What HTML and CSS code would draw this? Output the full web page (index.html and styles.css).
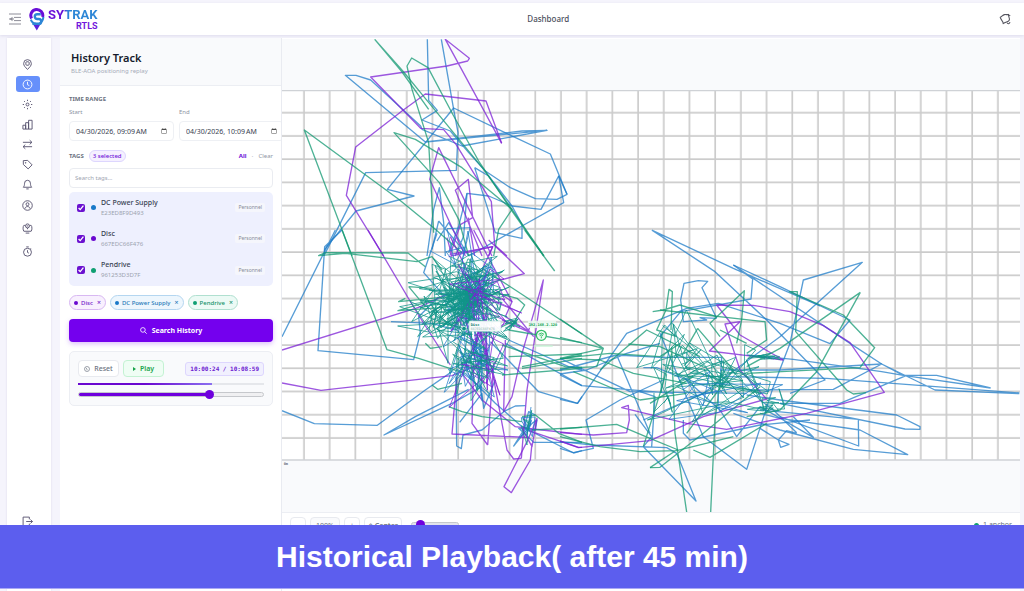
FILE: index.html
```html
<!DOCTYPE html>
<html lang="en">
<head>
  <meta charset="UTF-8" />
  <meta name="viewport" content="width=device-width, initial-scale=1.0" />
  <title>Sytrak RTLS - History Track</title>
  <link rel="stylesheet" href="styles.css">
</head>
<body>
  <!-- Top bar -->
  <header class="topbar">
    <div class="brand">
      <button class="icon-button" aria-label="Toggle menu">
        <svg width="12" height="12" viewBox="0 0 12 12" fill="none" stroke="#8d8d98" stroke-width="1"><path d="M0 1h12M5 4.4h7M5 7.6h7M0 11h12M0 6h5"/><path d="M3.5 3.8v4.4L.6 6z" fill="#8d8d98" stroke="none"/></svg>
      </button>
      <svg class="logo-mark" width="16" height="24" viewBox="0 0 16 24" fill="none">
        <path d="M2.600 11.500A6 6 0 1 1 13.600 10" stroke="#6a0fd8" stroke-width="3"/>
        <path d="M11.800 7.200H8.200a2.400 2.400 0 0 0 0 4.800h1.600a2.400 2.400 0 0 1 0 4.800H3.400" stroke="#2d86d6" stroke-width="2.400"/>
        <path d="M1.800 12.600c1 2.400 3 4 5.200 4.200M14.300 10c0 3-2 5.500-4 6.700" stroke="#2d86d6" stroke-width="2"/>
        <path d="M4.500 18h6.500L7.800 23.500z" fill="#5a22dc"/>
      </svg>
      <div class="logo-text">
        <span class="logo-name">SYTRAK</span>
        <span class="logo-sub">RTLS</span>
      </div>
    </div>
    <div class="page-title">Dashboard</div>
    <button class="icon-button" aria-label="Notifications">
      <svg width="12" height="12" viewBox="0 0 12 12" fill="none" stroke="#55555f" stroke-width="1.100" stroke-linejoin="round"><path d="M1.200 4.200C3 4 3.400 2 5.400 1.600 7 1.300 8 2 9.600 1.400 9 3.400 10.800 4.600 10.400 6.800 9.800 9 7 8.600 4.200 10.600 4.400 8 1.600 7 1.200 4.200z"/><path d="M8 9.600c.6 1.600 2.600 1.400 3-.4M10.200 2.200l1 .6"/></svg>
    </button>
  </header>

  <main class="workspace">
    <!-- Sidebar -->
    <nav class="sidebar">
      <a class="nav-link" href="#" aria-label="Live map"><svg viewBox="0 0 12 12"><path d="M6 11.300C3.500 9 1.800 7.200 1.800 4.900a4.200 4.200 0 0 1 8.400 0C10.200 7.200 8.500 9 6 11.300z"/><rect x="4.200" y="3" width="3.600" height="3.800" rx="1"/></svg></a>
      <a class="nav-link active" href="#" aria-label="History"><svg viewBox="0 0 12 12"><circle cx="6" cy="6" r="4.800"/><path d="M6 3v3.200l2 1"/></svg></a>
      <a class="nav-link" href="#" aria-label="Settings"><svg viewBox="0 0 12 12"><circle cx="6" cy="6" r="1.600"/><path d="M6 .8v1.400M6 9.800v1.400M.8 6h1.400M9.800 6h1.400M2.300 2.300l1 1M8.700 8.700l1 1M9.700 2.300l-1 1M3.300 8.700l-1 1"/></svg></a>
      <a class="nav-link" href="#" aria-label="Reports"><svg viewBox="0 0 12 12"><path d="M1 6.800h3V11H1zM4 4h3.200v7H4zM7.200 1.400H11V11H7.200z"/></svg></a>
      <a class="nav-link" href="#" aria-label="Transfers"><svg viewBox="0 0 12 12"><path d="M1 3.600h9.800M8.400 1.300l2.400 2.300-2.400 2.300M11 8.400H1.200M3.600 6.100L1.200 8.400l2.400 2.300"/></svg></a>
      <a class="nav-link" href="#" aria-label="Tags"><svg viewBox="0 0 12 12"><path d="M1.400 1.800l4.800-.3 4.800 4.900-4.300 4.400L1.500 6z"/><circle cx="4" cy="4.200" r=".4"/></svg></a>
      <a class="nav-link" href="#" aria-label="Alerts"><svg viewBox="0 0 12 12"><path d="M1.400 9h9.200C9.200 7.600 9.400 6.400 9.200 4.600a3.200 3.200 0 0 0-6.400 0C2.600 6.400 2.800 7.600 1.400 9zM4.700 10.800h2.600"/></svg></a>
      <a class="nav-link wide" href="#" aria-label="Users"><svg viewBox="0 0 12 12"><circle cx="6" cy="6" r="5.200"/><circle cx="6" cy="4.600" r="1.600"/><path d="M3.300 9.400c.2-3 5.200-3 5.400 0"/></svg></a>
      <a class="nav-link wide" href="#" aria-label="Assets"><svg viewBox="0 0 12 12"><path d="M3.200 2.600H2C1 3.600.8 7.600 2 9h8c1.200-1.400 1-5.400 0-6.400H8.800M4 11h4"/><circle cx="6" cy="3.200" r="2.200"/><path d="M5 3.200h2M6 5.400v1.400"/></svg></a>
      <a class="nav-link wide" href="#" aria-label="Timers"><svg viewBox="0 0 12 12"><circle cx="6" cy="6.800" r="4.300"/><path d="M6 4.600v2.400l1.500.8M4.600 1h2.800M9.400 2.600l.8.800"/></svg></a>
      <a class="nav-link logout" href="#" aria-label="Log out"><svg viewBox="0 0 12 12"><path d="M8 3.600V1.200H1.200v9.600H8V8.400M4.600 6h6.800M9.200 3.800L11.400 6 9.200 8.200"/></svg></a>
    </nav>

    <!-- History panel -->
    <section class="panel">
      <div class="panel-header">
        <h1>History Track</h1>
        <p>BLE-AOA positioning replay</p>
      </div>

      <div class="panel-body">
        <h2 class="section-label">TIME RANGE</h2>
        <div class="date-row">
          <div class="date-field">
            <label for="start">Start</label>
            <input type="datetime-local" id="start" value="2026-04-30T09:09">
          </div>
          <div class="date-field">
            <label for="end">End</label>
            <input type="datetime-local" id="end" value="2026-04-30T10:09">
          </div>
        </div>

        <div class="tags-head">
          <h2 class="section-label">TAGS</h2>
          <span class="count">3 selected</span>
          <button class="text-button all">All</button>
          <span class="dot-sep">·</span>
          <button class="text-button">Clear</button>
        </div>
        <input type="text" class="tag-search" placeholder="Search tags..." aria-label="Search tags">

        <div class="tag-list">
          <label class="tag-row">
            <input type="checkbox" checked>
            <span class="dot blue"></span>
            <span class="tag-info"><span class="tag-name">DC Power Supply</span><span class="tag-id">E23ED8F9D493</span></span>
            <span class="tag-type">Personnel</span>
          </label>
          <label class="tag-row">
            <input type="checkbox" checked>
            <span class="dot purple"></span>
            <span class="tag-info"><span class="tag-name">Disc</span><span class="tag-id">667EDC66F476</span></span>
            <span class="tag-type">Personnel</span>
          </label>
          <label class="tag-row">
            <input type="checkbox" checked>
            <span class="dot green"></span>
            <span class="tag-info"><span class="tag-name">Pendrive</span><span class="tag-id">961253D3D7F</span></span>
            <span class="tag-type">Personnel</span>
          </label>
        </div>

        <div class="chips">
          <button class="chip chip-purple"><span class="dot purple"></span>Disc <span class="chip-x">×</span></button>
          <button class="chip chip-blue"><span class="dot blue"></span>DC Power Supply <span class="chip-x">×</span></button>
          <button class="chip chip-green"><span class="dot green"></span>Pendrive <span class="chip-x">×</span></button>
        </div>

        <button class="search-button">
          <svg width="7" height="7" viewBox="0 0 12 12" fill="none" stroke="#fff" stroke-width="1.400"><circle cx="5" cy="5" r="4"/><path d="M8 8l3.500 3.500"/></svg>
          Search History
        </button>

        <div class="player">
          <div class="player-row">
            <button class="player-button"><svg width="6" height="6" viewBox="0 0 12 12" fill="none" stroke="#6b7280" stroke-width="1.300"><circle cx="6" cy="6" r="5"/><path d="M3.500 3.500L6 6v2.500"/></svg>Reset</button>
            <button class="player-button play"><svg width="3" height="4" viewBox="0 0 3 4"><path d="M0 0l3 2L0 4z" fill="#16a34a"/></svg>Play</button>
            <span class="clock">10:00:24 / 10:08:59</span>
          </div>
          <div class="progress"><div class="progress-fill" style="width: 72%"></div></div>
          <input type="range" class="seek" min="0" max="100" value="72" aria-label="Playback position">
        </div>
      </div>
    </section>

    <!-- Map -->
    <section class="map-panel">
      <svg class="map" viewBox="0 0 2214 1419">
        <defs>
          <pattern id="grid" x="27" y="186" width="77.100" height="69.700" patternUnits="userSpaceOnUse">
            <path d="M39 0V70M0 35H78" stroke="#cbcbcb" stroke-width="5"/>
          </pattern>
        </defs>
        <rect class="floor" y="155" width="2214" height="1108"/>
        <rect y="155" width="2214" height="1108" fill="url(#grid)"/>
        <path d="M0 155H2214M0 1263H2214" stroke="#cfd2d6" stroke-width="4"/>

        <!-- Upper part of the floor -->
        <g class="track-blue" transform="translate(0 -9)">
          <path d="M436 10L440 193 466 223 420 252 505 285 560 350 610 405 685 455 760 488 825 490 855 475 830 420 777 520 690 510 620 480 555 472 530 570 500 650"/>
          <path d="M855 475L805 354 680 295 515 216 316 460 396 480 222 525 128 640 126 660"/>
          <path d="M478 10L515 220 528 290 523 403 251 410 128 655"/>
          <path d="M416 270L266 132 222 118 190 118 430 318 795 283 720 285 430 318M795 283L540 330 420 280 416 270"/>
          <path d="M578 395L640 590 720 607 720 565 690 510 620 420 578 395M830 420L845 500 720 570 560 660"/>
          <path d="M435 660L455 520 472 455 485 560 490 660M470 555L450 640M470 555L550 650M555 472L545 600 520 660M465 615L500 560 560 660"/>
        </g>
        <g class="track-purple" transform="translate(0 -9)">
          <path d="M659 322L490 10 562 67 557 75 495 90 266 123 416 277 485 281 522 325 628 497 638 627 675 660"/>
          <path d="M659 322L612 195 430 174 360 225 221 333 193 478 305 660"/>
          <path d="M550 660L443 430 470 335 630 660M600 660L520 463 559 430 572 545 535 566 505 655 632 632 620 660M559 545L578 660M495 605L510 660"/>
        </g>
        <g class="track-green" transform="translate(0 -9)">
          <path d="M278 10L365 108 420 175 605 400 690 520 786 660M278 10L358 105 440 220"/>
          <path d="M455 590L440 320 390 160 375 90 389 66 438 95 515 240 590 375 690 525 785 660"/>
          <path d="M560 660L530 550 472 440 336 290 400 310 540 395 690 520 650 580 635 660"/>
          <path d="M210 660L67 282 350 490 460 580 540 650"/>
        </g>

        <!-- Left part of the floor -->
        <g class="track-blue" transform="translate(0 573)">
          <path d="M0 320L160 0M180 0L128 50 108 362 395 389 415 310 410 260 470 200"/>
          <path d="M0 542L97 581 286 586 430 480 510 425M600 470L510 520 306 615 400 560 560 478M327 275L450 280 520 300"/>
          <path d="M522 440L524 648 538 656 543 615 600 600 665 545 700 528 730 527"/>
          <path d="M625 335L770 485 887 520 900 500M670 340L900 467M680 330L860 410 900 420M550 430L640 520 720 590 875 669 900 662"/>
          <path d="M760 555L740 545 725 600 695 648 750 580 765 570 760 600 710 595 755 637 900 637M465 10L425 128 480 190M533 577L600 490 605 535 640 450"/>
        </g>
        <g class="track-purple" transform="translate(0 573)">
          <path d="M258 0L400 240 505 405M0 360L410 232 500 190M0 459L117 481 510 437 600 400"/>
          <path d="M500 80L632 50 600 120M620 30L727 131 600 165 550 130M575 0L690 215M505 20L560 130"/>
          <path d="M755 320L660 205M718 685L735 480 784 150 720 370 690 500 665 545 670 330M640 180L690 215 670 260 750 310 660 270"/>
          <path d="M735 622L510 612 525 440M617 645L570 580 575 400M617 645L635 400M630 420L660 580 675 660 695 687 718 685"/>
          <path d="M750 640L745 690 688 788 666 770 735 635 765 565 750 650 720 595M540 430L600 510 700 590 780 600 900 613M740 602L890 652 900 652"/>
        </g>
        <g class="track-green" transform="translate(0 573)">
          <path d="M180 0L315 359 410 385 550 430M430 110L378 69 130 68 110 77 190 70 405 95 450 80 480 120"/>
          <path d="M728 0L818 123M600 115L700 180 900 312M630 185L705 205 728 225 700 270 640 300"/>
          <path d="M520 230L348 242 440 215 540 240M500 200L350 215 370 205M380 170L450 175M380 170L430 230M430 340L445 355 480 350M450 465L467 478 540 460"/>
          <path d="M500 530L540 545 600 560 720 575M680 300L900 338M660 435L900 415M720 410L900 375M680 380L900 372M720 415L900 385M660 345L850 410 900 412M720 560L760 555 830 610 900 637M750 600L900 592"/>
        </g>

        <!-- Right part of the floor -->
        <g class="track-blue" transform="translate(834 543)">
          <path d="M520 135L660 200 870 300 810 371 660 310 475 250 380 265 200 340 52 550 0 538"/>
          <path d="M780 258L520 145 277 31 465 155 620 300 775 460 795 480 690 520M520 135L870 370 965 432M520 135L578 177 573 237 362 275 300 350"/>
          <path d="M660 350L907 127 730 180 690 370 640 500 560 748 430 650 375 520 300 340M660 350L430 520 250 600"/>
          <path d="M470 295L426 203 443 184 415 182 372 190 362 240 370 305 440 300 420 293 470 295"/>
          <path d="M0 415L210 515 560 520M0 465L65 497 340 520M0 462L80 450 200 400 300 370M170 405L270 640M170 405L300 412 485 412 480 500M170 405L0 450"/>
          <path d="M310 480L180 540 78 600 100 685 40 698 0 685M225 583L275 650 250 680 408 843 350 700 320 683 100 675 0 665M240 515L285 530 275 680"/>
          <path d="M480 450L660 450 965 432 1125 510 1378 521M1292 504L1130 466 1030 466 1292 504M500 470L800 475 1378 519M560 405L700 418 965 455 1030 466 965 432M1040 466L840 550 660 550M965 432L820 508 560 510"/>
          <path d="M560 525L660 540 1010 585 1080 620 1080 628 1035 627 660 550M600 570L895 598 896 678 660 590M600 580L660 595 900 630 1043 704 880 688 660 630 520 580"/>
          <path d="M600 540L640 570 710 638M700 590L760 652 600 560M655 660L680 632 710 640M655 660L687 673 662 682 655 660M600 625L655 660"/>
          <path d="M250 443L290 443 380 480 480 570 530 650 600 560M370 600L370 640 390 660 600 615 750 600"/>
        </g>
        <g class="track-purple" transform="translate(834 543)">
          <path d="M670 420L540 345 470 255 580 256 690 275 790 317 870 368 973 517 740 580 500 628 380 610 185 563 205 556 208 600 200 638 100 645 0 638"/>
          <path d="M670 420L448 393 540 305 495 312 540 450 620 537 430 590 270 662 55 683 0 663"/>
        </g>
        <g class="track-green" transform="translate(834 543)">
          <path d="M0 297L130 385 110 440 0 445M0 352L130 385 0 415M0 415L150 400 300 410 360 370M205 372L300 380 430 440"/>
          <path d="M333 330L337 215 327 208 318 270 290 330 350 350M480 350L450 310 553 212 545 300 530 370M278 275L310 270 360 255 470 290"/>
          <path d="M901 217L660 385 560 440M901 217L800 400 770 455 660 570 560 590M918 518L880 522 860 510 707 335 712 215 688 215 850 285 944 383 900 443 560 460"/>
          <path d="M300 270L615 305 620 360 560 400M380 876L345 640 335 380M452 876L465 600 485 450M400 690L450 712 620 610M270 743L300 742 430 640 600 500"/>
          <path d="M0 627L170 613 270 655 355 690M0 650L120 680 240 695 350 692 520 650M0 415L120 420 220 460 380 490M40 455L240 540 380 520M270 743L350 690M335 400L300 520 250 680"/>
          <path d="M120 450L260 330 420 410M413 325L370 400M413 325L520 450 380 640M270 550L400 470M480 330L560 370"/>
        </g>

        <!-- Dense movement around the anchors, filled by script.js -->
        <g id="dense"></g>

        <g class="anchor">
          <rect x="738" y="845" width="84" height="22"/>
          <text x="740" y="860">192.168.2.120</text>
          <circle cx="778" cy="889" r="15"/>
          <path d="M770 886q8-8 16 0M773 890q5-5 10 0M778 892v6"/>
          <path class="anchor-line" d="M755 921H812"/>
        </g>
        <circle cx="546" cy="869" r="7" fill="#109488" stroke="#fff" stroke-width="2"/>
        <g class="tooltip">
          <rect x="561" y="846" width="96" height="31" rx="4"/>
          <text x="566" y="860">Disc</text>
          <text class="tooltip-id" x="566" y="872">667EDC66F476</text>
        </g>
        <text class="scale-label" x="5" y="1277">0m</text>
      </svg>

      <div class="map-toolbar">
        <button class="tool">−</button>
        <span class="tool zoom-level">100%</span>
        <button class="tool">+</button>
        <button class="tool center">◇ Center</button>
        <input type="range" class="trail" min="0" max="100" value="10" aria-label="Trail length">
        <span class="anchor-count"><span class="dot green"></span>1 anchor</span>
      </div>
    </section>
  </main>

  <div class="caption">Historical Playback( after 45 min)</div>

  <script src="script.js"></script>
</body>
</html>
```
FILE: styles.css
```css
* {
  box-sizing: border-box;
}

html, body {
  margin: 0;
  height: 100%;
  overflow: hidden;
}

body {
  display: flex;
  flex-direction: column;
  background: #f5f4fc;
  font-family: "Noto Sans", "Open Sans", sans-serif;
  font-size: 7px;
  color: #374151;
}

button, input {
  font-family: inherit;
  font-size: 7px;
  color: inherit;
}

button {
  padding: 0;
  border: none;
  background: none;
}

h1, h2, p {
  margin: 0;
}

/* Top bar */
.topbar {
  display: flex;
  align-items: center;
  justify-content: space-between;
  height: 32px;
  margin-top: 3px;
  padding: 0 13px 0 9px;
  background: white;
  box-shadow: 0 1px 3px rgba(60, 50, 120, 0.12);
}

.brand {
  display: flex;
  align-items: center;
}

.icon-button {
  display: flex;
}

.logo-mark {
  margin-left: 8px;
}

.logo-text {
  display: flex;
  flex-direction: column;
  align-items: flex-end;
  margin-left: 3px;
  font-family: Roboto, sans-serif;
  font-weight: bold;
}

.logo-name {
  font-size: 13px;
  line-height: 14px;
  background: linear-gradient(90deg, #6a0fd8 30%, #2d86d6 40%);
  background-clip: text;
  -webkit-background-clip: text;
  color: transparent;
}

.logo-sub {
  font-size: 9px;
  line-height: 9px;
  color: #7318dc;
}

.page-title {
  font-size: 8px;
  line-height: 12px;
  font-weight: 500;
  color: #4b4f5c;
}

/* Layout below the top bar */
.workspace {
  display: flex;
  flex: 1;
  min-height: 0;
  padding: 3px 4px 0 7px;
}

.sidebar {
  display: flex;
  flex-direction: column;
  align-items: center;
  width: 44px;
  padding: 16px 3px 60px 0;
  background: white;
  box-shadow: 0 0 2px rgba(60, 50, 120, 0.12);
}

.nav-link {
  display: flex;
  align-items: center;
  justify-content: center;
  width: 24px;
  height: 16px;
  margin: 2px 0;
  border-radius: 3px;
}

.nav-link.wide {
  height: 19px;
}

.nav-link svg {
  width: 11px;
  height: 11px;
  fill: none;
  stroke: #56526f;
  stroke-width: 1;
}

.nav-link.active {
  background: #6690fb;
}

.nav-link.active svg {
  stroke: white;
}

.logout {
  margin-top: auto;
}

/* History panel */
.panel {
  width: 222px;
  flex-shrink: 0;
  margin-left: 9px;
  background: white;
  border-right: 1px solid #e9ebf1;
  overflow: hidden;
}

.panel-header {
  height: 48px;
  padding: 12px 11px;
  background: #f9fafc;
  border-bottom: 1px solid #eceef3;
}

.panel-header h1 {
  font-size: 11px;
  line-height: 16px;
  font-weight: 600;
  color: #151a2d;
}

.panel-header p {
  font-size: 6px;
  line-height: 10px;
  color: #a5abb9;
}

.panel-body {
  padding: 8px 8px 0 9px;
}

.section-label {
  font-size: 6px;
  line-height: 10px;
  font-weight: bold;
  color: #6b7280;
}

.date-row {
  display: flex;
  gap: 5px;
  margin-top: 3px;
}

.date-field {
  flex: none;
  width: 105px;
}

.date-field label {
  display: block;
  font-size: 6px;
  line-height: 10px;
  color: #8e94a3;
}

.date-field input {
  display: block;
  width: 100%;
  height: 20px;
  margin-top: 4px;
  padding: 0 6px;
  border: 1px solid #eef0f4;
  border-radius: 4px;
  background: white;
}

.date-field input::-webkit-datetime-edit,
.date-field input::-webkit-datetime-edit-month-field,
.date-field input::-webkit-datetime-edit-day-field,
.date-field input::-webkit-datetime-edit-year-field,
.date-field input::-webkit-datetime-edit-hour-field,
.date-field input::-webkit-datetime-edit-minute-field,
.date-field input::-webkit-datetime-edit-ampm-field {
  padding: 0;
}

.date-field input::-webkit-calendar-picker-indicator {
  width: 6px;
  height: 6px;
  margin: 0;
  padding: 0;
  opacity: 0.7;
}

.tags-head {
  display: flex;
  align-items: center;
  height: 12px;
  margin: 9px 0 6px;
}

.count {
  margin-left: 5px;
  margin-right: auto;
  padding: 0 3px;
  border: 1px solid #ddd6fe;
  border-radius: 6px;
  background: #f5f0ff;
  font-size: 6px;
  line-height: 10px;
  font-weight: 500;
  color: #6d10d8;
}

.text-button {
  font-size: 6px;
  color: #9096a5;
}

.text-button.all {
  font-weight: bold;
  color: #6d10d8;
}

.dot-sep {
  margin: 0 5px;
  color: #c5c8d0;
}

.tag-search {
  display: block;
  width: 100%;
  height: 20px;
  padding: 0 5px;
  border: 1px solid #eaecf1;
  border-radius: 4px;
  font-size: 6px;
}

.tag-search::placeholder {
  color: #a0a5b1;
}

.tag-list {
  margin-top: 4px;
  border-radius: 5px;
  background: #eef0fe;
}

.tag-row {
  display: flex;
  align-items: center;
  height: 31px;
  padding: 0 8px;
}

.tag-row:last-child {
  height: 32px;
}

.tag-row input {
  width: 8px;
  height: 8px;
  margin: 0 6px 0 0;
  accent-color: #6a10d0;
}

.dot {
  display: inline-block;
  flex: none;
  width: 5px;
  height: 5px;
  border-radius: 50%;
}

.dot.blue { background: #1878c8; }
.dot.purple { background: #6a08d0; }
.dot.green { background: #0f9f72; }

.tag-info {
  display: flex;
  flex-direction: column;
  margin-left: 5px;
  margin-right: auto;
}

.tag-name {
  font-size: 7px;
  line-height: 10px;
  font-weight: 500;
}

.tag-id {
  font-size: 6px;
  line-height: 10px;
  color: #9ca3af;
}

.tag-type {
  padding: 0 3px;
  border-radius: 2px;
  background: #f5f6fc;
  font-size: 5px;
  line-height: 9px;
  color: #858b9a;
}

.chips {
  display: flex;
  gap: 4px;
  margin-top: 9px;
}

.chip {
  display: flex;
  align-items: center;
  gap: 3px;
  height: 15px;
  padding: 0 4px;
  border: 1px solid;
  border-radius: 8px;
  font-size: 6px;
  font-weight: 500;
  white-space: nowrap;
}

.chip .dot {
  width: 4px;
  height: 4px;
}

.chip-x {
  margin-left: 1px;
  font-size: 7px;
  line-height: 8px;
}

.chip-purple {
  color: #7318c8;
  background: #f8f0fe;
  border-color: #d8b8f2;
}

.chip-blue {
  color: #1f78b8;
  background: #edf6fd;
  border-color: #b4d6f0;
}

.chip-green {
  color: #129068;
  background: #ecfaf5;
  border-color: #b0e0d0;
}

.search-button {
  display: flex;
  align-items: center;
  justify-content: center;
  gap: 5px;
  width: 100%;
  height: 23px;
  margin-top: 9px;
  border-radius: 4px;
  background: #7400ee;
  color: white;
  font-weight: bold;
  box-shadow: 0 2px 5px rgba(116, 0, 238, 0.25);
}

.player {
  margin-top: 9px;
  padding: 8px;
  border: 1px solid #eceef3;
  border-radius: 5px;
  background: #f9fafc;
}

.player-row {
  display: flex;
  align-items: center;
  gap: 4px;
}

.player-button {
  display: flex;
  align-items: center;
  justify-content: center;
  gap: 4px;
  width: 41px;
  height: 17px;
  border: 1px solid #e8eaef;
  border-radius: 4px;
  background: white;
  font-weight: 500;
  color: #6b7280;
}

.player-button.play {
  background: #effdf4;
  border-color: #c4f2d3;
  font-weight: 600;
  color: #16a34a;
}

.clock {
  margin-left: auto;
  padding: 0 4px;
  border: 1px solid #ddd6fe;
  border-radius: 3px;
  background: #f1f0fe;
  font-family: "DejaVu Sans Mono", monospace;
  font-size: 6px;
  line-height: 12px;
  font-weight: bold;
  color: #6d20d0;
}

.progress {
  height: 2px;
  margin-top: 6px;
  background: #e5e7eb;
}

.progress-fill {
  height: 100%;
  background: linear-gradient(90deg, #6a08d0 50%, #8b70f0);
}

.seek, .trail {
  display: block;
  -webkit-appearance: none;
  appearance: none;
  width: 100%;
  height: 5px;
  margin: 7px 0 0;
  border: 1px solid #c6c8cc;
  border-radius: 3px;
  background: linear-gradient(90deg, #6f00dd 71%, #f0f0f2 71%);
}

.seek::-webkit-slider-thumb, .trail::-webkit-slider-thumb {
  -webkit-appearance: none;
  width: 9px;
  height: 9px;
  border-radius: 50%;
  background: #6f00dd;
}

/* Map */
.map-panel {
  display: flex;
  flex-direction: column;
  flex: 1;
  min-width: 0;
  background: white;
}

.map {
  display: block;
  width: 100%;
  margin-top: 1px;
  background: #f9fafc;
}

.floor {
  fill: white;
}

.track-blue, .track-purple, .track-green {
  fill: none;
  stroke-width: 4;
  stroke-linejoin: round;
  stroke-opacity: 0.75;
}

.track-blue { stroke: #1f7cc8; }
.track-purple { stroke: #7c1fd6; }
.track-green { stroke: #129872; }

#dense polyline {
  stroke-width: 3;
}

#dense .track-green {
  stroke: #109488;
}

.map text {
  font-family: "DejaVu Sans Mono", monospace;
  font-size: 11px;
  font-weight: bold;
  fill: #12a150;
}

.anchor rect {
  fill: #ecfdf3;
  fill-opacity: 0.85;
}

.anchor circle {
  fill: #ecfdf3;
  stroke: #35bd68;
  stroke-width: 4;
}

.anchor path {
  fill: none;
  stroke: #35bd68;
  stroke-width: 3;
}

.anchor .anchor-line {
  stroke: #c5f5d5;
  stroke-width: 4;
}

.tooltip rect {
  fill: white;
  fill-opacity: 0.95;
  stroke: #b5dfd8;
  stroke-width: 2;
}

.map .tooltip text {
  fill: #12806e;
}

.map .tooltip .tooltip-id {
  font-size: 10px;
  font-weight: normal;
  fill: #8fb5b0;
}

.map .scale-label {
  fill: #6b7280;
}

.map-toolbar {
  display: flex;
  flex: 1;
  align-items: flex-start;
  gap: 4px;
  padding: 4px 8px;
  border-top: 1px solid #eceef3;
}

.tool {
  min-width: 16px;
  height: 17px;
  padding: 0 3px;
  border: 1px solid #e8eaef;
  border-radius: 4px;
  background: white;
  line-height: 15px;
  color: #6b7280;
}

.zoom-level {
  width: 30px;
  text-align: center;
  background: #f9fafc;
}

.center {
  font-weight: 600;
}

.trail {
  width: 48px;
  margin: 5px 0 0 5px;
  background: #e2e3ec;
}

.anchor-count {
  display: flex;
  align-items: center;
  gap: 4px;
  margin-left: auto;
  line-height: 16px;
  color: #6b7280;
}

/* Caption over the lower edge of the screen */
.caption {
  position: absolute;
  left: 0;
  right: 0;
  bottom: 2px;
  height: 64px;
  border-bottom: 1px solid #a9a9f5;
  background: #5c5eee;
  color: white;
  font-family: "Liberation Sans", Arial, sans-serif;
  font-size: 30px;
  line-height: 64px;
  font-weight: bold;
  text-align: center;
}
```
FILE: script.js
```js
// Movement clusters: centre, spread, number of points, track colour
const clusters = [
  { x: 570, y: 780, sx: 45, sy: 65, n: 70, track: 'blue' },
  { x: 585, y: 950, sx: 42, sy: 65, n: 56, track: 'blue' },
  { x: 530, y: 640, sx: 42, sy: 60, n: 12, track: 'blue' },
  { x: 545, y: 765, sx: 66, sy: 52, n: 150, track: 'green' },
  { x: 595, y: 800, sx: 50, sy: 60, n: 26, track: 'purple' },
  { x: 600, y: 930, sx: 38, sy: 75, n: 24, track: 'purple' },
  { x: 520, y: 820, sx: 76, sy: 56, n: 70, track: 'green' },
  { x: 580, y: 940, sx: 50, sy: 55, n: 36, track: 'green' },
  { x: 690, y: 855, sx: 14, sy: 12, n: 24, track: 'green' },
  { x: 740, y: 1160, sx: 16, sy: 26, n: 16, track: 'blue' },
  { x: 735, y: 1160, sx: 14, sy: 22, n: 10, track: 'green' },
  { x: 1310, y: 1020, sx: 80, sy: 50, n: 56, track: 'green' },
  { x: 1190, y: 940, sx: 62, sy: 50, n: 28, track: 'green' },
  { x: 1140, y: 1080, sx: 45, sy: 65, n: 10, track: 'green' },
  { x: 1340, y: 1050, sx: 95, sy: 45, n: 16, track: 'blue' },
  { x: 1440, y: 955, sx: 36, sy: 6, n: 18, track: 'green' },
  { x: 1460, y: 1095, sx: 40, sy: 22, n: 20, track: 'green' }
];

let seed = 45;
function random() {
  seed = (seed * 16807) % 2147483647;
  return seed / 2147483647;
}

// Sum of uniform values, close to a normal distribution
function spread() {
  return (random() + random() + random() - 1.5) * 2;
}

const dense = document.getElementById('dense');

clusters.forEach(c => {
  const points = [];
  for (let i = 0; i < c.n; i++) {
    points.push(Math.round(c.x + spread() * c.sx) + ' ' + Math.round(c.y + spread() * c.sy));
  }
  const line = document.createElementNS('http://www.w3.org/2000/svg', 'polyline');
  line.setAttribute('points', points.join(' '));
  line.setAttribute('class', 'track-' + c.track);
  dense.appendChild(line);
});
```
